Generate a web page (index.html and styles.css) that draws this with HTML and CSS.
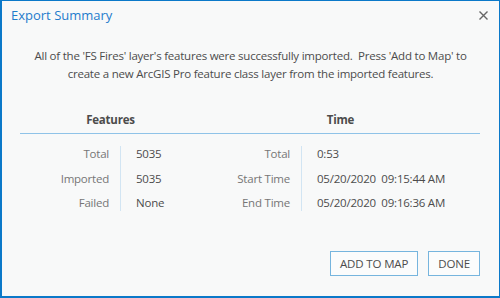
FILE: index.html
```html
<!DOCTYPE html>
<html lang="en">
<head>
  <meta charset="UTF-8">
  <title>Export Summary</title>
  <link rel="stylesheet" href="styles.css">
</head>
<body>

<div class="dialog">
  <header class="dialog-header">
    <h1 class="dialog-title">Export Summary</h1>
    <button class="close" aria-label="Close">
      <svg width="9" height="9" viewBox="0 0 9 9"><path d="M0.5 0.5 L8.5 8.5 M8.5 0.5 L0.5 8.5" stroke="#666" stroke-width="1.4"/></svg>
    </button>
  </header>

  <p class="message">All of the 'FS Fires' layer's features were successfully imported.&nbsp; Press 'Add to Map' to<br>create a new ArcGIS Pro feature class layer from the imported features.</p>

  <div class="summary">
    <section class="group">
      <h2 class="group-title">Features</h2>
      <div class="stats">
        <div class="labels">
          <span>Total</span>
          <span>Imported</span>
          <span>Failed</span>
        </div>
        <div class="values">
          <span>5035</span>
          <span>5035</span>
          <span>None</span>
        </div>
      </div>
    </section>
    <section class="group">
      <h2 class="group-title">Time</h2>
      <div class="stats">
        <div class="labels">
          <span>Total</span>
          <span>Start Time</span>
          <span>End Time</span>
        </div>
        <div class="values">
          <span>0:53</span>
          <span>05/20/2020&nbsp; 09:15:44 AM</span>
          <span>05/20/2020&nbsp; 09:16:36 AM</span>
        </div>
      </div>
    </section>
  </div>

  <footer class="actions">
    <button class="btn">ADD TO MAP</button>
    <button class="btn">DONE</button>
  </footer>
</div>

</body>
</html>
```

FILE: styles.css
```css
html,
body {
  margin: 0;
  height: 100%;
}

body {
  font-family: "Open Sans", "Noto Sans", "Liberation Sans", sans-serif;
  font-size: 11.5px;
  letter-spacing: -0.22px;
  color: #4c4c4c;
  background-color: #f8f9f9;
}

.dialog {
  box-sizing: border-box;
  height: 100%;
  display: flex;
  flex-direction: column;
  border-style: solid;
  border-color: #0b79c9;
  border-width: 1px 1px 2px 2px;
  background-color: #f8f9f9;
}

.dialog-header {
  display: flex;
  justify-content: space-between;
  align-items: center;
  padding: 3px 11px 0 9px;
  height: 22px;
}

.dialog-title {
  margin: 0;
  font-size: 13px;
  font-weight: normal;
  letter-spacing: 0;
  color: #1f7ccc;
}

.close {
  border: 0;
  padding: 0;
  background: none;
  display: flex;
}

.message {
  margin: 21px 0 0;
  text-align: center;
  line-height: 18px;
}

.summary {
  display: grid;
  grid-template-columns: 181px 1fr;
  margin: 27px 19px 0 18px;
}

.group-title {
  margin: 0;
  padding-bottom: 3px;
  text-align: center;
  font-size: 11.5px;
  font-weight: bold;
  line-height: 20px;
  border-bottom: 1px solid #8fc3e8;
}

.stats {
  display: flex;
  margin-top: 12px;
  line-height: 16px;
}

.labels,
.values {
  display: flex;
  flex-direction: column;
  gap: 8.5px;
}

.labels {
  width: 89px;
  padding-right: 11px;
  text-align: right;
  color: #767676;
}

.values {
  border-left: 1px solid #d2e5f3;
  padding-left: 15px;
  white-space: nowrap;
}

.actions {
  margin-top: auto;
  display: flex;
  justify-content: flex-end;
  gap: 10px;
  padding: 0 19px 20px 0;
}

.btn {
  height: 25px;
  padding: 0 9px;
  font-family: inherit;
  font-size: 11.5px;
  letter-spacing: -0.15px;
  color: #4c4c4c;
  background-color: #fbfcfc;
  border: 1px solid #76b5de;
}
```
